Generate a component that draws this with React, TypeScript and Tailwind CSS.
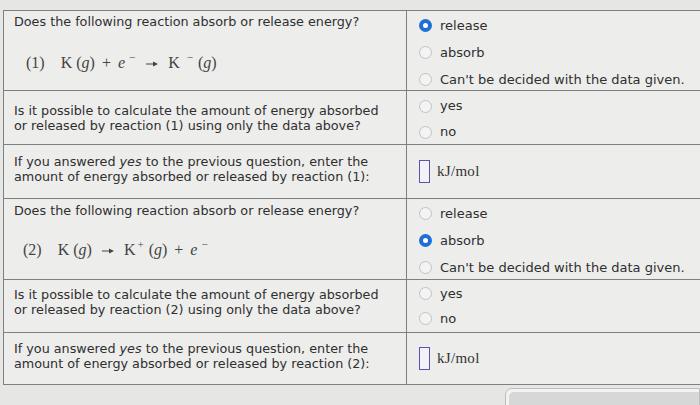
import React from 'react';

const sans = "font-['DejaVu_Sans','Verdana',sans-serif]";
const serif = "font-['Liberation_Serif','Times_New_Roman',serif]";

function Radio({ checked }: { checked?: boolean }) {
  return checked ? (
    <span className="block w-[13px] h-[13px] rounded-full border-[4px] border-[#1f6ed6] bg-white shrink-0" />
  ) : (
    <span className="block w-[13px] h-[13px] rounded-full border border-[#c2c2c2] bg-[#f3f3f3] shrink-0" />
  );
}

function Option({ label, checked, h }: { label: string; checked?: boolean; h: string }) {
  return (
    <div className={`flex items-center gap-[8px] ${h}`}>
      <Radio checked={checked} />
      <span className="text-[13px] text-[#2f2f2f]">{label}</span>
    </div>
  );
}

function Arrow() {
  return (
    <svg width="12" height="8" viewBox="0 0 12 8" className="inline-block mx-[10px] mb-[1px]">
      <line x1="0" y1="4" x2="8" y2="4" stroke="#444" strokeWidth="1" />
      <polygon points="7,1.5 12,4 7,6.5" fill="#444" />
    </svg>
  );
}

function Sup({ children, l = 'ml-[4px]' }: { children: React.ReactNode; l?: string }) {
  return <sup className={`text-[11px] relative -top-[7px] ${l} mr-[1px]`}>{children}</sup>;
}

function Phase() {
  return (
    <span className="ml-[4px]">
      (<i>g</i>)
    </span>
  );
}

function Units() {
  return (
    <div className="flex items-center gap-[7px] pl-[12px]">
      <span className="block w-[11px] h-[23px] border border-[#5d52b3] bg-[#f2f2f6]" />
      <span className={`${serif} text-[15px] text-[#333] tracking-[0.3px]`}>kJ/mol</span>
    </div>
  );
}

function Row({ h, left, right, rightClass = '' }: { h: string; left: React.ReactNode; right: React.ReactNode; rightClass?: string }) {
  return (
    <div className={`grid grid-cols-[403px_1fr] border-b border-[#7f7f7f] ${h}`}>
      <div className="border-r border-[#7f7f7f] pl-[10px] text-[12.75px] leading-[15px] text-[#2f2f2f]">{left}</div>
      <div className={`pl-[12px] ${rightClass}`}>{right}</div>
    </div>
  );
}

export default function App() {
  return (
    <div className={`${sans} w-[700px] h-[405px] overflow-hidden bg-[#e6e6e5] pt-[10px]`}>
      <div className="ml-[3px] w-[720px] border-t border-l border-[#7f7f7f] bg-[#ededec]">
        <Row
          h="h-[80px]"
          left={
            <div className="pt-[3px]">
              <p className="leading-[16px]">Does the following reaction absorb or release energy?</p>
              <p className={`${serif} text-[16px] leading-[20px] text-[#444] mt-[23px] pl-[12px]`}>
                (1)<span className="ml-[16px]">K</span>
                <Phase /> <span className="mx-[3px]">+</span> <i>e</i>
                <Sup>−</Sup>
                <Arrow />K<Sup l="ml-[7px]">−</Sup>
                <Phase />
              </p>
            </div>
          }
          rightClass="pt-[1px]"
          right={
            <>
              <Option h="h-[27px]" label="release" checked />
              <Option h="h-[27px]" label="absorb" />
              <Option h="h-[27px]" label="Can't be decided with the data given." />
            </>
          }
        />
        <Row
          h="h-[54px]"
          left={
            <p className="pt-[12px]">
              Is it possible to calculate the amount of energy absorbed
              <br />
              or released by reaction (1) using only the data above?
            </p>
          }
          rightClass="pt-[2px]"
          right={
            <>
              <Option h="h-[26px]" label="yes" />
              <Option h="h-[26px]" label="no" />
            </>
          }
        />
        <Row
          h="h-[54px]"
          left={
            <p className="pt-[9px]">
              If you answered <i>yes</i> to the previous question, enter the
              <br />
              amount of energy absorbed or released by reaction (1):
            </p>
          }
          rightClass="flex items-center !pl-0"
          right={<Units />}
        />
        <Row
          h="h-[81px]"
          left={
            <div className="pt-[4px]">
              <p className="leading-[16px]">Does the following reaction absorb or release energy?</p>
              <p className={`${serif} text-[16px] leading-[20px] text-[#444] mt-[21px] pl-[9px]`}>
                (2)<span className="ml-[16px]">K</span>
                <Phase />
                <Arrow />K<Sup l="ml-[2px]">+</Sup>
                <Phase /> <span className="mx-[3px]">+</span> <i>e</i>
                <Sup>−</Sup>
              </p>
            </div>
          }
          rightClass="pt-[1px]"
          right={
            <>
              <Option h="h-[27px]" label="release" />
              <Option h="h-[27px]" label="absorb" checked />
              <Option h="h-[27px]" label="Can't be decided with the data given." />
            </>
          }
        />
        <Row
          h="h-[53px]"
          left={
            <p className="pt-[7px]">
              Is it possible to calculate the amount of energy absorbed
              <br />
              or released by reaction (2) using only the data above?
            </p>
          }
          rightClass="pt-[1px]"
          right={
            <>
              <Option h="h-[25px]" label="yes" />
              <Option h="h-[25px]" label="no" />
            </>
          }
        />
        <Row
          h="h-[52px]"
          left={
            <p className="pt-[8px]">
              If you answered <i>yes</i> to the previous question, enter the
              <br />
              amount of energy absorbed or released by reaction (2):
            </p>
          }
          rightClass="flex items-center !pl-0"
          right={<Units />}
        />
      </div>
      <div className="flex justify-end pt-[3px]">
        <div className="w-[195px] h-[30px] rounded-tl-[7px] border border-[#bdbdbd] bg-[#f3f3f3] p-[3px] pr-0">
          <div className="h-full rounded-tl-[5px] bg-[#d6d7d7]" />
        </div>
      </div>
    </div>
  );
}
